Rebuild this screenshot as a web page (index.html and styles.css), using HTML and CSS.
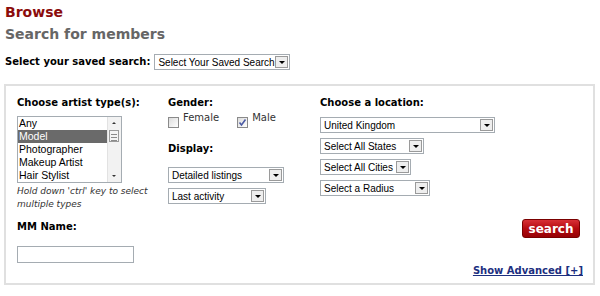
FILE: index.html
```html
<!DOCTYPE html>
<html lang="en">
<head>
    <meta charset="UTF-8">
    <title>Browse - Search for members</title>
    <link rel="stylesheet" href="styles.css">
</head>
<body>
    <h1 class="title">Browse</h1>
    <h2 class="subtitle">Search for members</h2>

    <div class="saved-row">
        <span class="label">Select your saved search:</span>
        <div class="dropdown w-saved"><span class="dd-text">Select Your Saved Search</span><span class="dd-arrow"></span></div>
    </div>

    <div class="search-box">
        <div class="columns">
            <div class="col col-type">
                <div class="label">Choose artist type(s):</div>
                <div class="listbox">
                    <ul class="list-items">
                        <li>Any</li>
                        <li class="selected">Model</li>
                        <li>Photographer</li>
                        <li>Makeup Artist</li>
                        <li>Hair Stylist</li>
                    </ul>
                    <div class="scrollbar">
                        <span class="sb-up"></span>
                        <span class="sb-thumb"></span>
                        <span class="sb-down"></span>
                    </div>
                </div>
                <p class="hint">Hold down 'ctrl' key to select multiple types</p>
            </div>

            <div class="col col-gender">
                <div class="label">Gender:</div>
                <div class="check-row">
                    <label class="check"><span class="box"></span>Female</label>
                    <label class="check"><span class="box checked"><svg width="9" height="9" viewBox="0 0 9 9"><path d="M1.5 4.5 L3.5 7 L7.5 1.5" fill="none" stroke="#4b5ba5" stroke-width="1.6"/></svg></span>Male</label>
                </div>
                <div class="label display-label">Display:</div>
                <div class="dropdown w-detailed"><span class="dd-text">Detailed listings</span><span class="dd-arrow"></span></div>
                <div class="dropdown w-activity"><span class="dd-text">Last activity</span><span class="dd-arrow"></span></div>
            </div>

            <div class="col col-location">
                <div class="label">Choose a location:</div>
                <div class="dropdown w-country"><span class="dd-text">United Kingdom</span><span class="dd-arrow"></span></div>
                <div class="dropdown w-states"><span class="dd-text">Select All States</span><span class="dd-arrow"></span></div>
                <div class="dropdown w-cities"><span class="dd-text">Select All Cities</span><span class="dd-arrow"></span></div>
                <div class="dropdown w-radius"><span class="dd-text">Select a Radius</span><span class="dd-arrow"></span></div>
            </div>
        </div>

        <div class="bottom-row">
            <div class="name-field">
                <div class="label">MM Name:</div>
                <input class="text-input" type="text">
            </div>
            <div class="actions">
                <button class="search-btn">search</button>
                <a class="advanced-link" href="#">Show Advanced [+]</a>
            </div>
        </div>
    </div>
</body>
</html>
```

FILE: styles.css
```css
body {
    margin: 0;
    padding: 0 5px;
    font-family: "DejaVu Sans", Verdana, sans-serif;
    font-size: 10px;
    color: #000;
    background-color: #fff;
}
.title {
    margin: 3px 0 0;
    font-size: 14px;
    line-height: 18px;
    color: #8b0c0c;
}
.subtitle {
    margin: 4px 0 0;
    font-size: 14px;
    line-height: 18px;
    color: #666;
}
.label {
    font-weight: bold;
    font-size: 10px;
    line-height: 14px;
}
.saved-row {
    display: flex;
    align-items: center;
    gap: 4px;
    margin-top: 11px;
    height: 16px;
}

/* fake windows style selects */
.dropdown {
    display: flex;
    align-items: center;
    box-sizing: border-box;
    height: 16px;
    border: 1px solid #a5acb2;
    background-color: #fff;
    font-family: "Liberation Sans", Arial, sans-serif;
    font-size: 10px;
}
.dd-text {
    flex: 1;
    padding-left: 3px;
    white-space: nowrap;
    overflow: hidden;
}
.dd-arrow {
    position: relative;
    box-sizing: border-box;
    width: 13px;
    height: 12px;
    margin-right: 1px;
    border: 1px solid #9a9a9a;
    background-color: #eee;
}
.dd-arrow::after {
    content: "";
    position: absolute;
    left: 3px;
    top: 4px;
    border-left: 3px solid transparent;
    border-right: 3px solid transparent;
    border-top: 3px solid #000;
}
.w-saved { width: 136px; }
.w-detailed { width: 116px; margin-top: 11px; }
.w-activity { width: 98px; margin-top: 5px; }
.w-country { width: 175px; margin-top: 7px; }
.w-states { width: 104px; margin-top: 5px; }
.w-cities { width: 91px; margin-top: 5px; }
.w-radius { width: 110px; margin-top: 5px; }

.search-box {
    margin: 14px 0 0 -1px;
    border: 2px solid #e0e0e0;
    padding: 10px 10px 6px 11px;
}
.columns {
    display: grid;
    grid-template-columns: 151px 152px 1fr;
}

.listbox {
    display: flex;
    box-sizing: border-box;
    width: 105px;
    height: 67px;
    margin-top: 6px;
    border: 1px solid #a5acb2;
    font-family: "Liberation Sans", Arial, sans-serif;
    font-size: 10.5px;
}
.list-items {
    flex: 1;
    margin: 0;
    padding: 0;
    list-style: none;
}
.list-items li {
    height: 13px;
    line-height: 13px;
    padding-left: 1px;
}
.list-items li.selected {
    background-color: #6a6a6a;
    color: #fff;
}
.scrollbar {
    position: relative;
    width: 13px;
    background-color: #f2f2f2;
    border-left: 1px solid #e2e2e2;
}
.sb-up, .sb-down {
    position: absolute;
    left: 4px;
    border-left: 2px solid transparent;
    border-right: 2px solid transparent;
}
.sb-up {
    top: 5px;
    border-bottom: 2px solid #333;
}
.sb-down {
    bottom: 5px;
    border-top: 2px solid #333;
}
.sb-thumb {
    position: absolute;
    top: 13px;
    left: 1px;
    width: 10px;
    height: 12px;
    box-sizing: border-box;
    border: 1px solid #9a9a9a;
    background: repeating-linear-gradient(#f4f4f4 0 2px, #8a8a8a 2px 3px);
    background-size: 6px 9px;
    background-position: 1px 1px;
    background-repeat: no-repeat;
    background-color: #f4f4f4;
}
.hint {
    margin: 2px 0 0;
    font-style: italic;
    font-size: 9px;
    line-height: 13px;
    color: #333;
    width: 140px;
}

.check-row {
    display: flex;
    gap: 18px;
    height: 16px;
    margin-top: 2px;
}
.check {
    display: flex;
    align-items: flex-start;
    gap: 4px;
    line-height: 12px;
    font-size: 10px;
    color: #333;
}
.box {
    display: flex;
    align-items: center;
    justify-content: center;
    box-sizing: border-box;
    width: 11px;
    height: 11px;
    margin-top: 5px;
    border: 1px solid #8a8a8a;
    background: linear-gradient(135deg, #dcdcdc, #fff);
}
.display-label {
    margin-top: 14px;
}

.bottom-row {
    display: flex;
    justify-content: space-between;
    margin-top: 8px;
}
.name-field .label {
    line-height: 15px;
}
.text-input {
    display: block;
    box-sizing: border-box;
    width: 117px;
    height: 17px;
    margin-top: 12px;
    border: 1px solid #a5acb2;
    padding: 0 2px;
}
.actions {
    display: flex;
    flex-direction: column;
    align-items: flex-end;
}
.search-btn {
    width: 58px;
    height: 19px;
    margin-right: 3px;
    padding: 0;
    border: 1px solid #7a0000;
    border-radius: 3px;
    background: linear-gradient(#d83036, #b50a10 50%, #960205);
    color: #fff;
    font-family: "DejaVu Sans", Verdana, sans-serif;
    font-weight: bold;
    font-size: 12px;
    cursor: pointer;
}
.advanced-link {
    margin-top: 26px;
    line-height: 13px;
    font-weight: bold;
    font-size: 10px;
    color: #1c2f80;
}
```
